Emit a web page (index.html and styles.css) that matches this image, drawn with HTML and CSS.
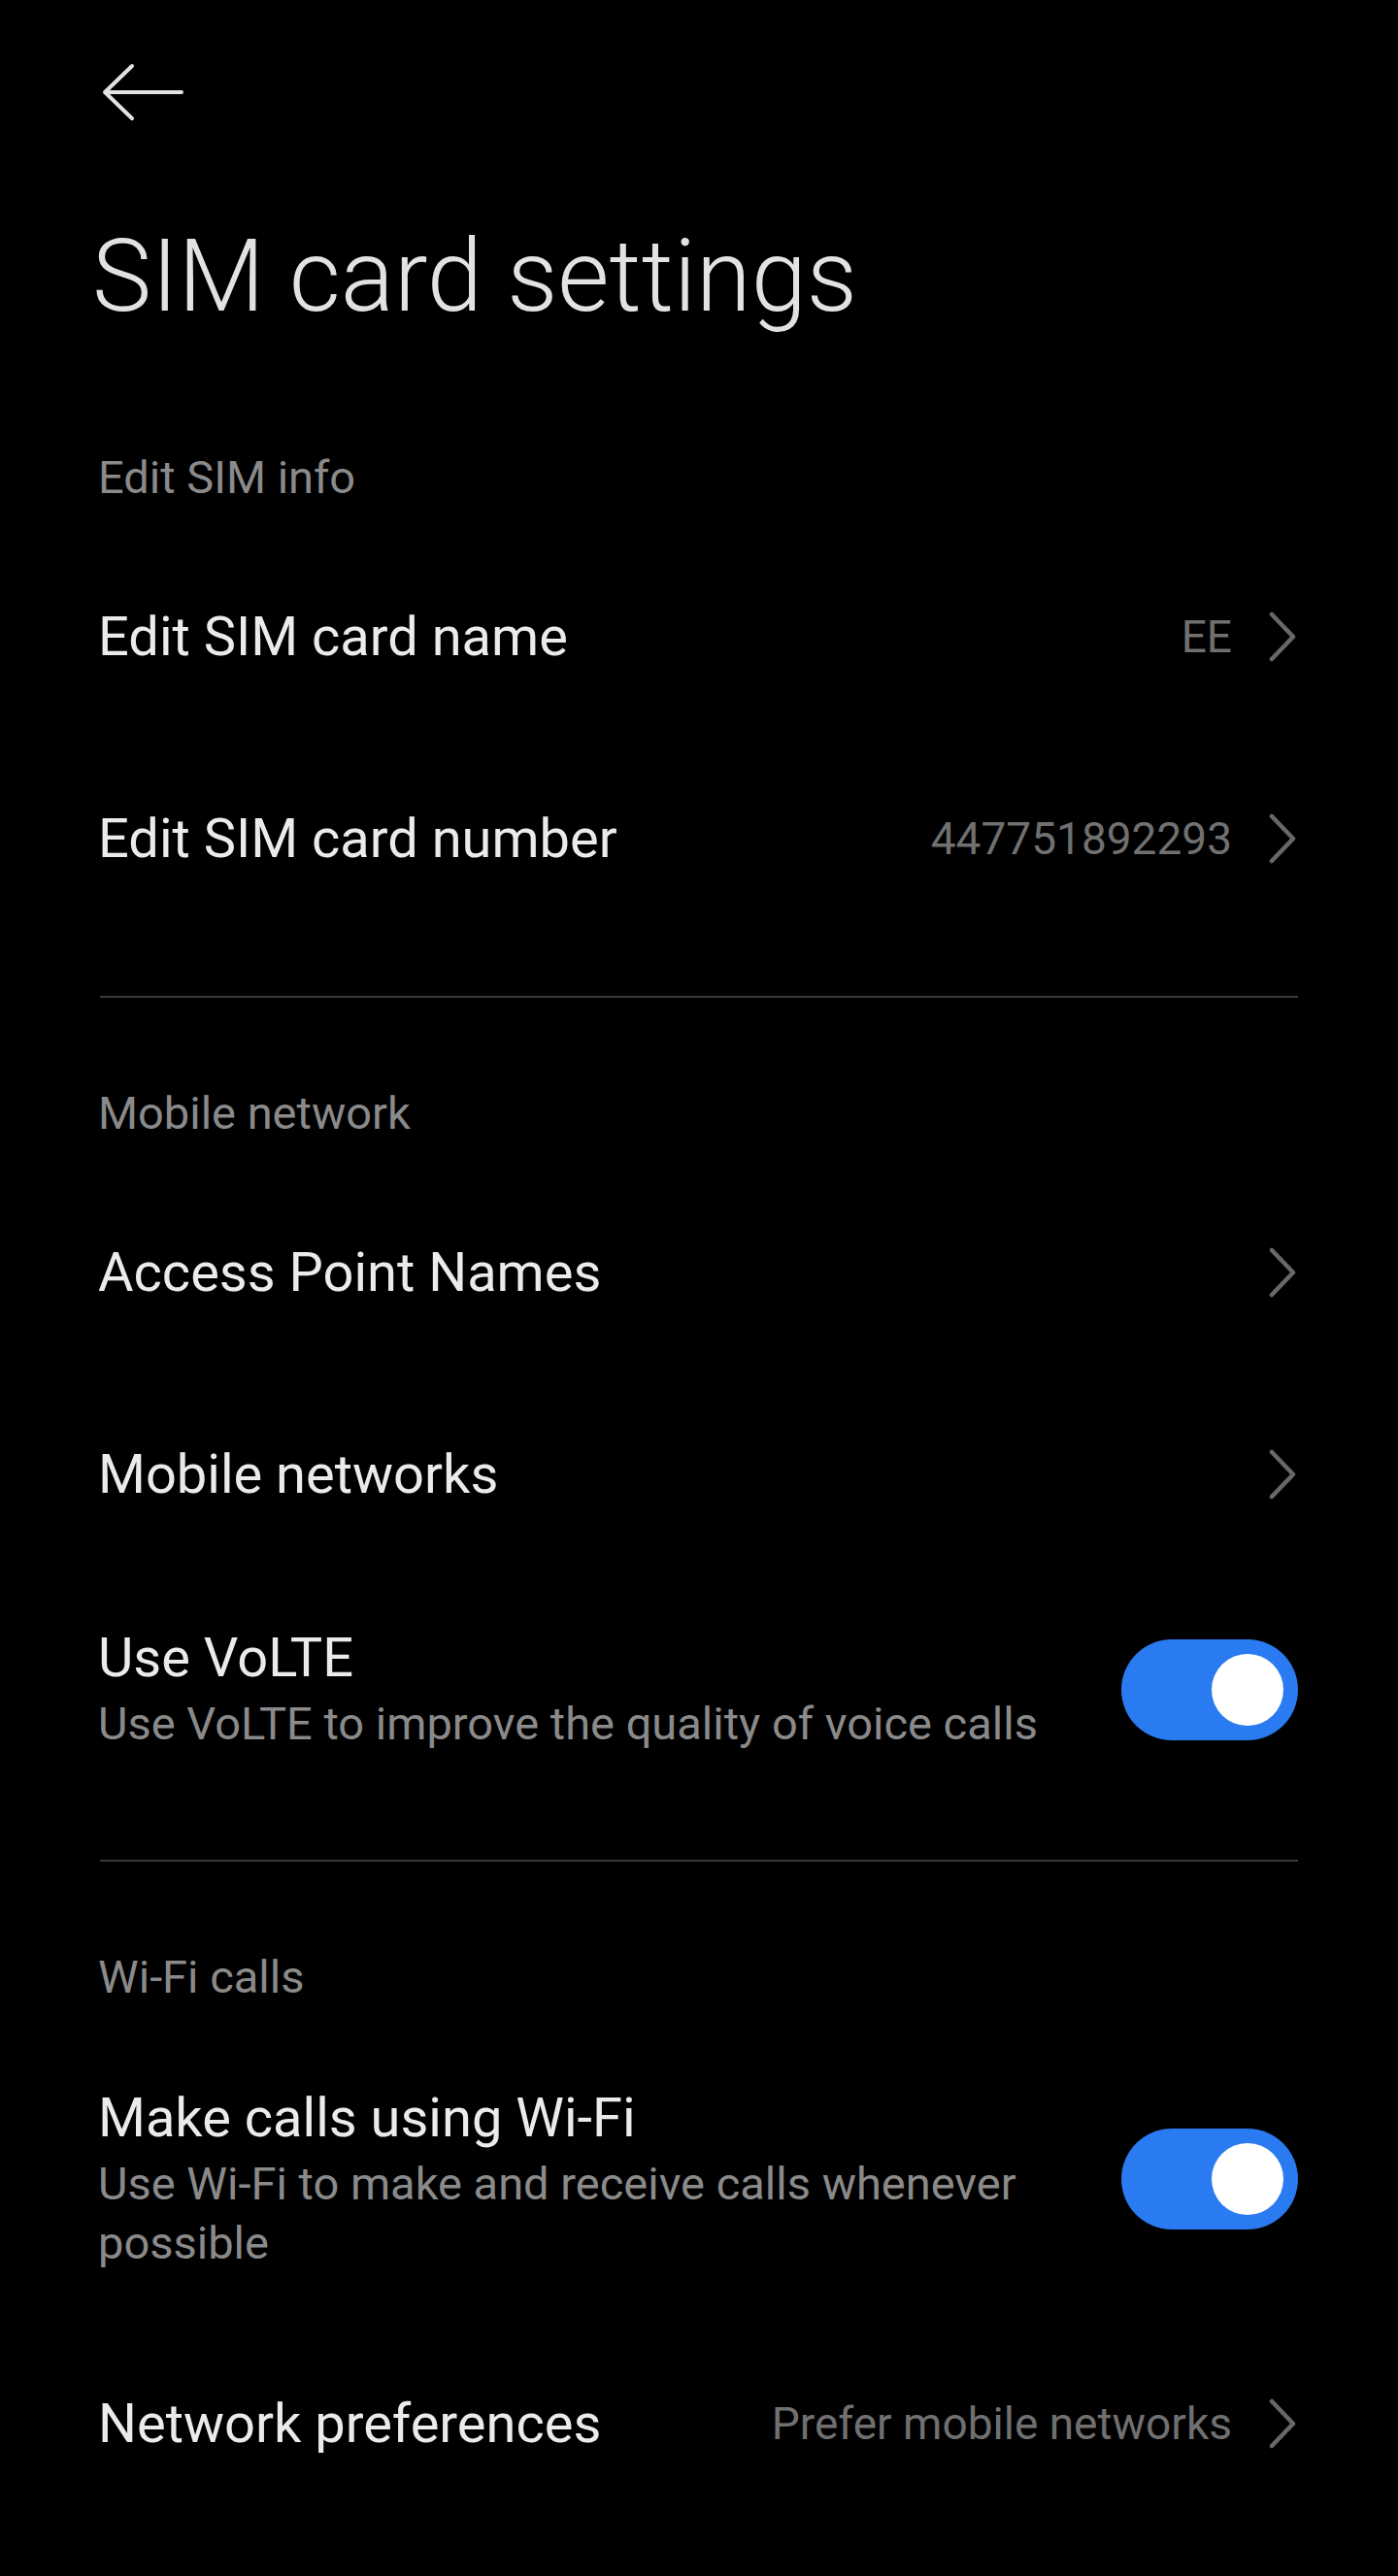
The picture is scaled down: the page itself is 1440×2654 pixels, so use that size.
FILE: index.html
```html
<!DOCTYPE html>
<html lang="en">
  <head>
    <meta charset="UTF-8">
    <meta name="viewport" content="width=device-width, initial-scale=1.0">
    <title>SIM card settings</title>
    <link rel="stylesheet" href="styles.css">
  </head>
  <body>
    <div class="layar">
      <div class="atas">
        <svg class="kembali" width="84" height="60" viewBox="0 0 84 60">
          <path d="M31 3 L3 30 L31 57 M3 30 L82 30" fill="none" stroke="#e2e2e2" stroke-width="4" stroke-linecap="round" stroke-linejoin="round"/>
        </svg>
      </div>
      <h1 class="judul">SIM card settings</h1>

      <div class="label">Edit SIM info</div>
      <div class="baris">
        <div class="teks"><div class="nama">Edit SIM card name</div></div>
        <span class="nilai">EE</span>
        <svg class="panah" width="32" height="52" viewBox="0 0 32 52"><path d="M5 3 L27 26 L5 49" fill="none" stroke="#686868" stroke-width="4.5" stroke-linecap="round" stroke-linejoin="round"/></svg>
      </div>
      <div class="baris">
        <div class="teks"><div class="nama">Edit SIM card number</div></div>
        <span class="nilai">447751892293</span>
        <svg class="panah" width="32" height="52" viewBox="0 0 32 52"><path d="M5 3 L27 26 L5 49" fill="none" stroke="#686868" stroke-width="4.5" stroke-linecap="round" stroke-linejoin="round"/></svg>
      </div>

      <hr class="garis">

      <div class="label">Mobile network</div>
      <div class="baris">
        <div class="teks"><div class="nama">Access Point Names</div></div>
        <svg class="panah" width="32" height="52" viewBox="0 0 32 52"><path d="M5 3 L27 26 L5 49" fill="none" stroke="#686868" stroke-width="4.5" stroke-linecap="round" stroke-linejoin="round"/></svg>
      </div>
      <div class="baris">
        <div class="teks"><div class="nama">Mobile networks</div></div>
        <svg class="panah" width="32" height="52" viewBox="0 0 32 52"><path d="M5 3 L27 26 L5 49" fill="none" stroke="#686868" stroke-width="4.5" stroke-linecap="round" stroke-linejoin="round"/></svg>
      </div>
      <div class="baris">
        <div class="teks">
          <div class="nama">Use VoLTE</div>
          <div class="ket">Use VoLTE to improve the quality of voice calls</div>
        </div>
        <div class="saklar"><div class="bulat"></div></div>
      </div>

      <hr class="garis">

      <div class="label">Wi-Fi calls</div>
      <div class="baris">
        <div class="teks">
          <div class="nama">Make calls using Wi-Fi</div>
          <div class="ket">Use Wi-Fi to make and receive calls whenever possible</div>
        </div>
        <div class="saklar"><div class="bulat"></div></div>
      </div>
      <div class="baris">
        <div class="teks"><div class="nama">Network preferences</div></div>
        <span class="nilai">Prefer mobile networks</span>
        <svg class="panah" width="32" height="52" viewBox="0 0 32 52"><path d="M5 3 L27 26 L5 49" fill="none" stroke="#686868" stroke-width="4.5" stroke-linecap="round" stroke-linejoin="round"/></svg>
      </div>
    </div>
  </body>
</html>
```
FILE: styles.css
```css
  body {
      margin: 0;
      background-color: #000;
      color: #e8e8e8;
      font-family: Roboto, "Noto Sans", sans-serif;
      }
  .layar {
      min-height: 2654px;
      padding: 0 103px 0 101px;
      box-sizing: border-box;
  }
  .atas {
      height: 190px;
      display: flex;
      align-items: center;
      margin-left: 4px;
  }
  .kembali {
      display: block;
  }
  .judul {
      margin: 33px 0 84px -6px;
      font-size: 103px;
      font-weight: 300;
      line-height: 124px;
      color: #e2e2e2;
  }
  .label {
      font-size: 47px;
      line-height: 121px;
      color: #8a8a8a;
  }
  .baris {
      min-height: 208px;
      padding: 52px 0;
      box-sizing: border-box;
      display: flex;
      align-items: center;
  }
  .teks {
      flex: 1;
      min-width: 0;
      margin-right: 40px;
  }
  .nama {
      font-size: 56px;
      line-height: 66px;
      color: #ebebeb;
  }
  .ket {
      margin-top: 4px;
      font-size: 47px;
      line-height: 61px;
      color: #8a8a8a;
  }
  .nilai {
      font-size: 46px;
      color: #707070;
      white-space: nowrap;
  }
  .panah {
      flex: none;
      display: block;
      margin-left: 36px;
  }
  .garis {
      border: 0;
      height: 2px;
      background-color: #393939;
      margin: 58px 0 58px 2px;
  }
  .saklar {
      flex: none;
      width: 182px;
      height: 104px;
      border-radius: 52px;
      background-color: #2a7bf1;
      display: flex;
      align-items: center;
      justify-content: flex-end;
      padding-right: 15px;
      box-sizing: border-box;
  }
  .bulat {
      width: 74px;
      height: 74px;
      border-radius: 50%;
      background-color: #fff;
  }
```
